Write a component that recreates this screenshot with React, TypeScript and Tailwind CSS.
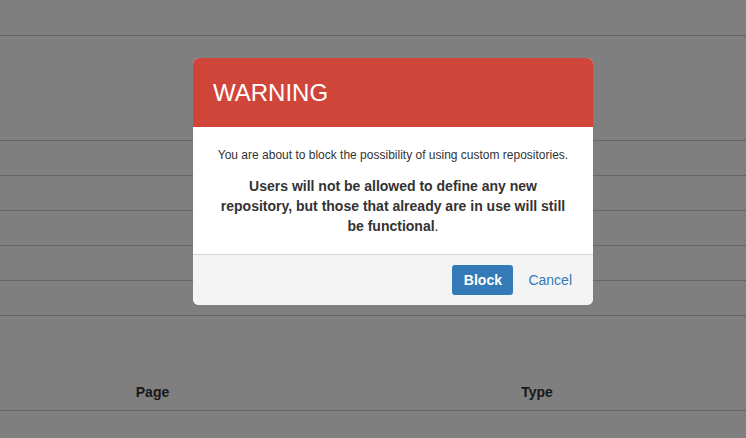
import React from 'react';

const rows = [0, 1, 2, 3, 4];

export default function App() {
  return (
    <div
      className="relative h-screen w-full overflow-hidden bg-white text-[#333]"
      style={{ fontFamily: '"Liberation Sans", Arial, sans-serif' }}
    >
      {/* page underneath the backdrop */}
      <div className="flex h-full flex-col">
        <div className="h-[35px] shrink-0" />
        <div className="h-[105px] shrink-0 border-t border-[#cccccc]" />
        {rows.map((r) => (
          <div key={r} className="h-[35px] shrink-0 border-t border-[#cccccc]" />
        ))}
        <div className="grid h-[95px] shrink-0 grid-cols-[305px_464px] items-end border-t border-[#cccccc] pb-2 text-center text-[14px] font-bold leading-5">
          <div>Page</div>
          <div>Type</div>
        </div>
        <div className="flex-1 border-t border-[#cccccc]" />
      </div>

      {/* backdrop */}
      <div className="absolute inset-0 bg-black/50" />

      {/* modal */}
      <div className="absolute left-[193px] top-[58px] w-[400px] overflow-hidden rounded-[6px] bg-white">
        <div className="flex h-[69px] items-center bg-[#d0453a] px-5">
          <h4 className="text-[24px] font-normal leading-[27px] text-white">WARNING</h4>
        </div>
        <div className="px-5 pb-[18px] pt-[18px] text-center">
          <p className="text-[12px] leading-5">You are about to block the possibility of using custom repositories.</p>
          <p className="mt-[11px] text-[14px] leading-5">
            <b>Users will not be allowed to define any new repository, but those that already are in use will still be functional</b>.
          </p>
        </div>
        <div className="flex items-center justify-end border-t border-[#d4d4d4] bg-[#f4f4f4] pb-[10px] pl-5 pr-[21px] pt-[10px]">
          <button className="h-[30px] w-[61px] rounded-[3px] bg-[#337ab7] text-[14px] font-bold text-white">
            Block
          </button>
          <a className="ml-[15px] text-[14px] text-[#337ab7]">Cancel</a>
        </div>
      </div>
    </div>
  );
}
